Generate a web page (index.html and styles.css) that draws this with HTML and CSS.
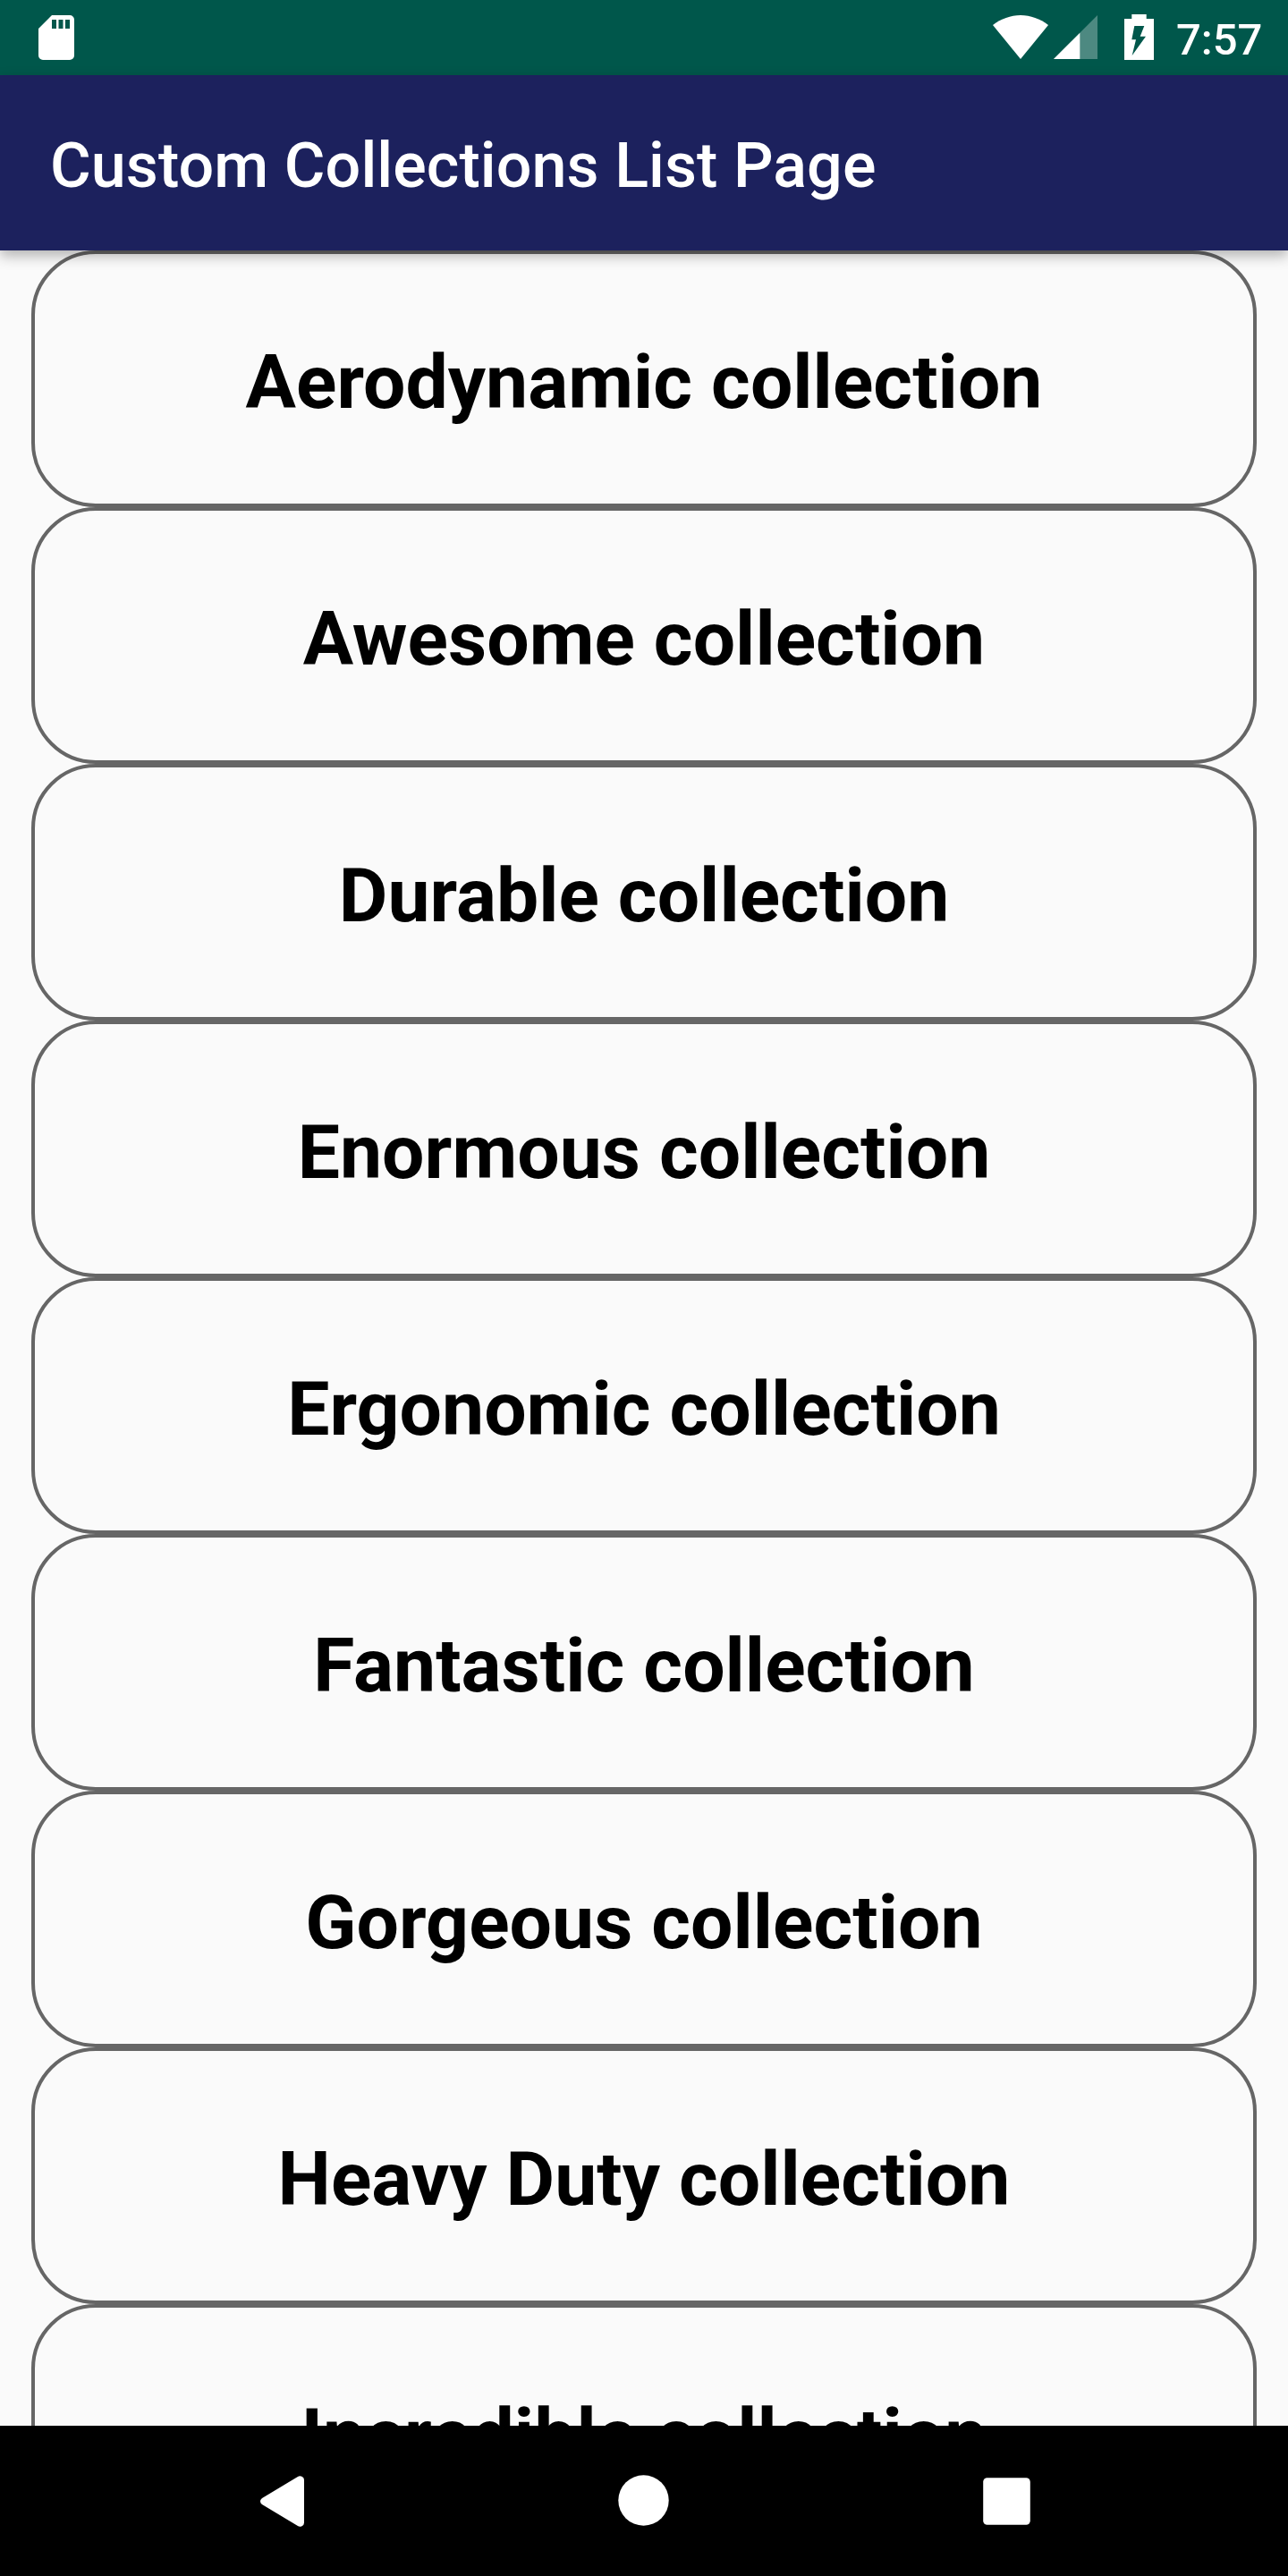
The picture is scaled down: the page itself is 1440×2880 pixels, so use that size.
FILE: index.html
```html
<!DOCTYPE html>
<html lang="en">
<head>
<meta charset="utf-8">
<title>Custom Collections List Page</title>
<link rel="stylesheet" href="styles.css">
</head>
<body>
<div class="screen">
  <div class="status-bar">
    <svg class="icon-sd" width="40" height="50" viewBox="0 0 40 50"><path fill="#fff" fill-rule="evenodd" d="M15 0H35a5 5 0 0 1 5 5V45a5 5 0 0 1-5 5H5a5 5 0 0 1-5-5V15ZM15 5V15H20V5ZM22.5 5V15H27.5V5ZM30 5V15H35V5Z"/></svg>
    <svg class="icon-wifi" width="62" height="50" viewBox="0 0 62 50"><path fill="#fff" d="M31 49L0 11C9 4 20 0 31 0S53 4 62 11Z"/></svg>
    <svg class="icon-signal" width="49" height="49" viewBox="0 0 49 49"><path fill="#fff" fill-opacity=".3" d="M0 49H49V0Z"/><path fill="#fff" d="M0 49H29.3V19.7Z"/></svg>
    <svg class="icon-battery" width="33" height="51" viewBox="0 0 33 51"><path fill="#fff" fill-rule="evenodd" d="M8.3 0H24.7V5H33V51H0V5H8.3ZM11.3 13L8.3 28.3H13L8.7 46L24 24.7H17.7L22.3 13Z"/></svg>
    <span class="clock">7:57</span>
  </div>
  <header class="app-bar"><h1 class="app-title">Custom Collections List Page</h1></header>
  <main class="list">
    <div class="card">Aerodynamic collection</div>
    <div class="card">Awesome collection</div>
    <div class="card">Durable collection</div>
    <div class="card">Enormous collection</div>
    <div class="card">Ergonomic collection</div>
    <div class="card">Fantastic collection</div>
    <div class="card">Gorgeous collection</div>
    <div class="card">Heavy Duty collection</div>
    <div class="card">Incredible collection</div>
  </main>
  <nav class="nav-bar">
    <svg class="nav-back" width="49" height="57" viewBox="0 0 49 57"><path fill="#fff" d="M2 25L41.500 1.200Q44-.5 46.500 .700T49 4.500V52.500Q49 55 46.500 56.300T41.500 55.800L2 32Q0 30.500 0 28.500T2 25Z"/></svg>
    <svg class="nav-home" width="57" height="57" viewBox="0 0 57 57"><circle cx="28.500" cy="28.500" r="28.200" fill="#fff"/></svg>
    <svg class="nav-recent" width="53" height="53" viewBox="0 0 53 53"><rect x=".2" y=".2" width="52.600" height="52.600" rx="4.500" fill="#fff"/></svg>
  </nav>
</div>
</body>
</html>
```
FILE: styles.css
```css
* { box-sizing: border-box; }
body { margin: 0; font-family: Roboto, sans-serif; background: #fafafa; }
.screen { display: flex; flex-direction: column; width: 1440px; height: 2880px; overflow: hidden; background: #fafafa; }
.status-bar { display: flex; align-items: flex-start; flex: none; height: 84px; padding: 16px 28px 0 43px; background: #00574b; color: #fff; }
.status-bar svg { flex: none; }
.icon-sd { margin-top: 1px; }
.icon-wifi { margin: 1px 6px 0 auto; }
.icon-signal { margin-top: 1px; margin-right: 30px; }
.icon-battery { margin-right: 24px; }
.clock { width: 98px; margin-top: 1px; padding-left: 1px; font-size: 49px; font-weight: 500; line-height: 56px; white-space: nowrap; }
.app-bar { position: relative; z-index: 1; display: flex; align-items: center; flex: none; height: 196px; padding: 6px 56px 0; background: #1c215d; color: #fff; box-shadow: 0 6px 14px rgba(0, 0, 0, .29); }
.app-title { margin: 0; font-size: 70px; font-weight: 500; line-height: 82px; letter-spacing: .08px; white-space: nowrap; }
.list { flex: 1; min-height: 0; padding: 0 35px; overflow: hidden; }
.card { display: flex; align-items: center; justify-content: center; height: 287px; padding-top: 8px; border: 4px solid #666; border-radius: 72px; color: #000; font-size: 84px; font-weight: 700; line-height: 98px; letter-spacing: .05px; }
.nav-bar { display: flex; align-items: center; flex: none; height: 168px; padding-left: 291px; background: #000; }
.nav-back { margin-top: 1px; }
.nav-home { margin: 0 0 1px 351px; }
.nav-recent { margin-left: 351px; margin-top: 1px; }
```
